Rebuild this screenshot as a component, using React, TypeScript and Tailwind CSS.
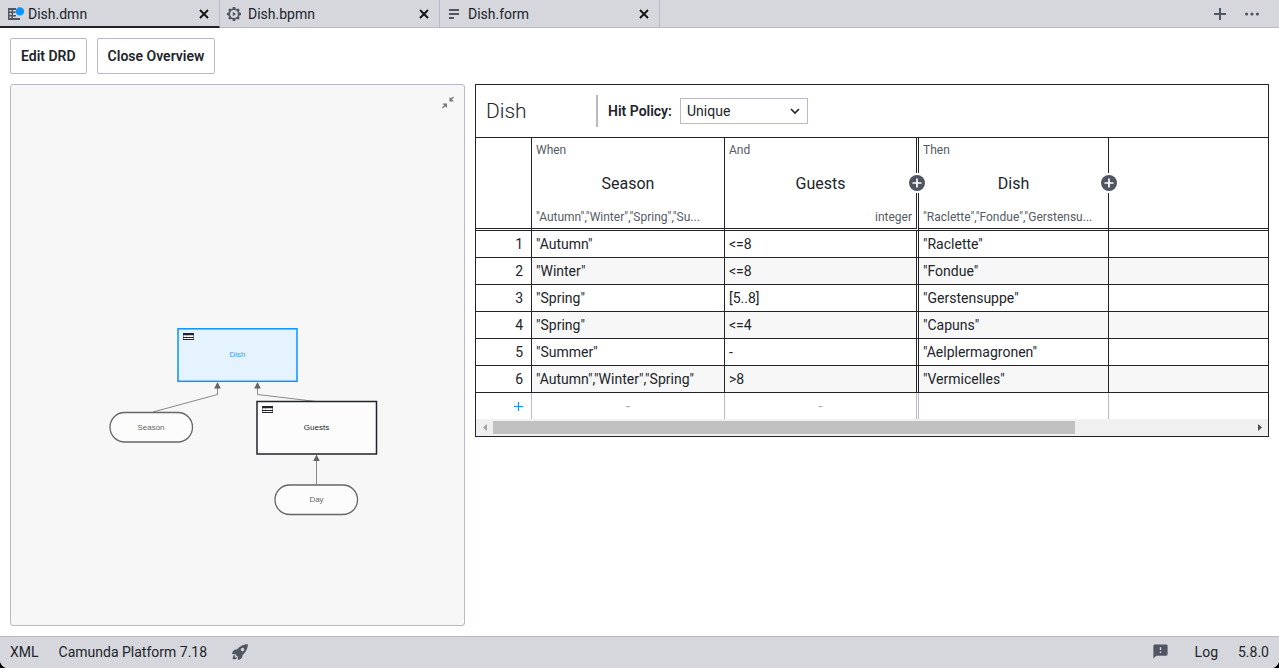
import type { ReactNode } from 'react';
import { IoRocketSharp } from 'react-icons/io5';
import { MdFeedback } from 'react-icons/md';

function DmnIcon() {
  return (
    <svg viewBox="0 0 16 16" className="size-4 overflow-visible" fill="none" aria-hidden="true">
      <path
        fill="#505562"
        fillRule="evenodd"
        d="M2 2h8v2H7v1.500h2.600V7H7v2h3v1.500H7V12h7v2H2zM3.500 4v1.500h2V4zm0 3v2h2V7zm0 3.500v1.500h2v-1.500z"
      />
      <circle cx="13.900" cy="5.400" r="4.200" fill="#0b93ff" />
    </svg>
  );
}

function BpmnIcon() {
  return (
    <svg viewBox="0 0 16 16" className="size-4" fill="none" stroke="#505562" aria-hidden="true">
      <circle cx="8" cy="8" r="4.800" strokeWidth="1.800" />
      <path
        strokeWidth="2.600"
        d="M8 1v2.200M8 12.800V15M1 8h2.200M12.800 8H15M3.050 3.050l1.500 1.500M11.450 11.450l1.500 1.500M3.050 12.950l1.500-1.500M11.450 4.550l1.500-1.500"
      />
      <path stroke="none" fill="#505562" d="M6.800 5.800v4.400L10 8z" />
    </svg>
  );
}

function FormIcon() {
  return (
    <svg viewBox="0 0 16 16" className="size-4" fill="#505562" aria-hidden="true">
      <path d="M3 3h10v2H3zM3 7h10v2H3zM3 11h5v2H3z" />
    </svg>
  );
}

const tabs: { name: string; icon: ReactNode; active?: boolean }[] = [
  { name: 'Dish.dmn', icon: <DmnIcon />, active: true },
  { name: 'Dish.bpmn', icon: <BpmnIcon /> },
  { name: 'Dish.form', icon: <FormIcon /> },
];

function TabBar() {
  return (
    <header className="flex h-7 shrink-0 bg-[#d5d7dd]">
      <nav className="flex">
        {tabs.map((tab) => (
          <div
            key={tab.name}
            className={
              tab.active
                ? 'flex w-[220px] items-center border-r border-b-2 border-r-[#b9b9c8] border-b-[#22242a] pt-px pr-[7px] pl-1.5'
                : 'flex w-[220px] items-center border-r border-b border-[#b9b9c8] pr-[7px] pl-1.5'
            }
          >
            <a href="#" className="flex flex-1 items-center gap-1.5 leading-5">
              {tab.icon}
              {tab.name}
            </a>
            <button type="button" aria-label={`Close ${tab.name}`} className="p-0.5">
              <svg viewBox="0 0 12 12" className="size-3" stroke="#111" strokeWidth="1.800">
                <path d="M2 2l8 8M10 2l-8 8" />
              </svg>
            </button>
          </div>
        ))}
      </nav>
      <div className="flex flex-1 items-center justify-end gap-3 border-b border-[#b9b9c8] pr-5">
        <button type="button" aria-label="New tab">
          <svg viewBox="0 0 12 12" className="size-3" stroke="#505562" strokeWidth="2">
            <path d="M6 0v12M0 6h12" />
          </svg>
        </button>
        <button type="button" aria-label="More tabs" className="pl-[7px]">
          <svg viewBox="0 0 14 4" className="h-1 w-3.5" fill="#505562">
            <circle cx="1.600" cy="2" r="1.600" />
            <circle cx="7" cy="2" r="1.600" />
            <circle cx="12.400" cy="2" r="1.600" />
          </svg>
        </button>
      </div>
    </header>
  );
}

function DecisionTableMark({ x, y }: { x: number; y: number }) {
  return (
    <g transform={`translate(${x} ${y})`}>
      <path fill="#fff" d="M0 0h11v7H0z" />
      <path fill="#22242a" d="M0 0h11v2.200H0zM0 3.900h11v1.100H0zM0 6h11v1.100H0zM0 2h.5v5H0zM10.500 2h.5v5h-.5z" />
      <path fill="#22242a" fillOpacity=".4" d="M3 2h.5v5H3z" />
    </g>
  );
}

function RequirementsDiagram() {
  return (
    <svg viewBox="0 0 453 540" className="size-full" role="img" aria-label="Decision requirements diagram">
      <g fill="none" stroke="#888" strokeWidth="1">
        <path d="M142 327L206.500 309.500V300" />
        <path d="M305 316.500L246.500 309.500V300" />
        <path d="M305.500 399.500V372" />
      </g>
      <g fill="#636363">
        <path d="M206.500 297l3.300 6.500h-6.600zM246.500 297l3.300 6.500h-6.600zM305.500 369.500l3.300 6.500h-6.600z" />
      </g>
      <rect x="167" y="243.800" width="119" height="52.500" fill="#e5f3ff" stroke="#0b93ff" strokeWidth="1.500" />
      <rect x="246" y="316.500" width="119.500" height="52.500" fill="#fcfcfc" stroke="#22242a" strokeWidth="1.500" />
      <g fill="#fcfcfc" stroke="#666" strokeWidth="1.300">
        <rect x="99" y="327.500" width="82.500" height="29.500" rx="14.700" />
        <rect x="264" y="400" width="82.500" height="29.500" rx="14.700" />
      </g>
      <DecisionTableMark x={172} y={248} />
      <DecisionTableMark x={251} y={321} />
      <g fontFamily="Liberation Sans, Arial, sans-serif" fontSize="8" textAnchor="middle">
        <text x="226.500" y="272" fill="#3d9bf5">Dish</text>
        <text x="140" y="345" fill="#666">Season</text>
        <text x="305.500" y="345" fill="#22242a">Guests</text>
        <text x="305.500" y="417" fill="#666">Day</text>
      </g>
    </svg>
  );
}

function Overview() {
  return (
    <section className="relative rounded-[3px] border border-[#b9b9c8] bg-[#f7f7f7]">
      <RequirementsDiagram />
      <button type="button" aria-label="Collapse overview" className="absolute top-2.5 right-2">
        <svg viewBox="0 0 16 16" className="size-4" fill="#777" stroke="#777" strokeWidth="1.300">
          <path d="M13.500 2l-2.500 2.500M2.500 13l2.500-2.500" />
          <path stroke="none" d="M9.500 2v4.500H14zM2.500 8.500H7V13z" />
        </svg>
      </button>
    </section>
  );
}

function AddColumnButton({ label }: { label: string }) {
  return (
    <button
      type="button"
      aria-label={label}
      className="absolute top-[35px] -right-[9px] z-10 flex h-5 w-4 items-center bg-white"
    >
      <svg viewBox="0 0 16 16" className="size-4" fill="#505562">
        <circle cx="8" cy="8" r="8" />
        <path d="M8 3.500v9M3.500 8h9" stroke="#fff" strokeWidth="1.700" />
      </svg>
    </button>
  );
}

type Column = { clause: string; name: string; type: string; alignRight?: boolean; add?: string };

const columns: Column[] = [
  { clause: 'When', name: 'Season', type: '"Autumn","Winter","Spring","Su...' },
  { clause: 'And', name: 'Guests', type: 'integer', alignRight: true, add: 'Add input' },
  { clause: 'Then', name: 'Dish', type: '"Raclette","Fondue","Gerstensu...', add: 'Add output' },
];

const rules = [
  ['"Autumn"', '<=8', '"Raclette"'],
  ['"Winter"', '<=8', '"Fondue"'],
  ['"Spring"', '[5..8]', '"Gerstensuppe"'],
  ['"Spring"', '<=4', '"Capuns"'],
  ['"Summer"', '-', '"Aelplermagronen"'],
  ['"Autumn","Winter","Spring"', '>8', '"Vermicelles"'],
];

const columnEdges = ['border-r', 'border-r-[3px] [border-right-style:double]', 'border-r'];

function DecisionTable() {
  return (
    <section className="self-start border border-[#22242a]">
      <div className="flex h-[52px] items-center px-2.5 pb-px">
        <h1 className="w-[110px] text-[21px] leading-8 font-light">Dish</h1>
        <div className="flex h-8 items-center border-l-2 border-[#b9b9c8] pl-2.5">
          <label htmlFor="hit-policy" className="w-[72px] font-semibold whitespace-nowrap">
            Hit Policy:
          </label>
          <div className="relative">
            <select
              id="hit-policy"
              defaultValue="Unique"
              className="h-[26px] w-32 appearance-none border border-[#b9b9c8] bg-white px-1.5"
            >
              <option>Unique</option>
              <option>First</option>
              <option>Any</option>
              <option>Collect</option>
            </select>
            <svg
              viewBox="0 0 10 10"
              className="pointer-events-none absolute top-2 right-2 size-2.5"
              fill="none"
              stroke="#22242a"
              strokeWidth="1.600"
            >
              <path d="M1 3l4 4 4-4" />
            </svg>
          </div>
        </div>
      </div>
      <table className="w-full table-fixed border-separate border-spacing-0 border-t border-[#22242a]">
        <colgroup>
          <col className="w-14" />
          <col className="w-[193px]" />
          <col className="w-[194px]" />
          <col className="w-[190px]" />
          <col />
        </colgroup>
        <thead>
          <tr>
            <td className="border-r border-b-[3px] border-[#22242a] [border-bottom-style:double]" />
            {columns.map((column, i) => (
              <th
                key={column.name}
                scope="col"
                className={`relative h-[93px] border-b-[3px] border-[#22242a] p-0 font-normal [border-bottom-style:double] ${columnEdges[i]}`}
              >
                <div className="flex h-[90px] flex-col justify-between px-1 pt-1 pb-[3px]">
                  <div className="text-left text-xs leading-4 text-[#565a63]">{column.clause}</div>
                  <div className="text-center text-base leading-5">{column.name}</div>
                  <div
                    className={`text-xs leading-4 whitespace-nowrap text-[#565a63] ${column.alignRight ? 'text-right' : 'text-left'}`}
                  >
                    {column.type}
                  </div>
                </div>
                {column.add && <AddColumnButton label={column.add} />}
              </th>
            ))}
            <td className="border-b-[3px] border-[#22242a] [border-bottom-style:double]" />
          </tr>
        </thead>
        <tbody>
          {rules.map((rule, row) => (
            <tr key={row} className="group h-[27px]">
              <th scope="row" className="border-r border-b border-[#22242a] py-0 pr-2 text-right font-normal">
                {row + 1}
              </th>
              {rule.map((value, i) => (
                <td
                  key={i}
                  className={`border-b border-[#22242a] px-1 py-0 whitespace-nowrap group-even:bg-[#f7f7f7] ${columnEdges[i]}`}
                >
                  {value}
                </td>
              ))}
              <td className="border-b border-[#22242a] group-even:bg-[#f7f7f7]" />
            </tr>
          ))}
          <tr className="h-[26px] text-center text-[#a5a7b0]">
            <td className="border-r border-[#b9b9c8] py-0 pr-2 text-right">
              <button type="button" aria-label="Add rule" className="ml-auto block">
                <svg viewBox="0 0 9 9" className="size-[9px]" stroke="#0b93ff" strokeWidth="1.200">
                  <path d="M4.500 0v9M0 4.500h9" />
                </svg>
              </button>
            </td>
            <td className="border-r border-[#b9b9c8] p-0">-</td>
            <td className={`border-[#b9b9c8] p-0 ${columnEdges[1]}`}>-</td>
            <td className="border-r border-[#b9b9c8]" />
            <td />
          </tr>
        </tbody>
      </table>
      <div className="flex h-[17px] items-center bg-[#f0f0f0]">
        <div className="flex w-[17px] justify-center">
          <svg viewBox="0 0 4 7" className="h-[7px] w-1" fill="#a3a3a3">
            <path d="M4 0v7L0 3.500z" />
          </svg>
        </div>
        <div className="flex-1">
          <div className="h-[13px] w-[76.8%] bg-[#c1c1c1]" />
        </div>
        <div className="flex w-[17px] justify-center">
          <svg viewBox="0 0 4 7" className="h-[7px] w-1" fill="#505050">
            <path d="M0 0v7l4-3.500z" />
          </svg>
        </div>
      </div>
    </section>
  );
}

function StatusBar() {
  return (
    <footer className="flex h-8 shrink-0 items-center justify-between rounded-b-lg border-t border-[#b9b9c8] bg-[#d5d7dd] px-2.5 pb-0.5">
      <div className="flex items-center gap-5">
        <button type="button">XML</button>
        <button type="button">Camunda Platform 7.18</button>
        <button type="button" aria-label="Deploy">
          <IoRocketSharp className="ml-1 size-[18px] text-[#505562]" />
        </button>
      </div>
      <div className="flex items-center gap-5">
        <button type="button" aria-label="Feedback">
          <MdFeedback className="mr-1.5 size-[17px] text-[#505562]" />
        </button>
        <button type="button">Log</button>
        <button type="button">5.8.0</button>
      </div>
    </footer>
  );
}

export default function App() {
  return (
    <div className="bg-black">
      <div className="flex min-h-screen flex-col rounded-b-lg bg-white font-['Roboto',sans-serif] text-sm text-[#22242a]">
        <TabBar />
        <main className="flex flex-1 flex-col gap-2.5 p-2.5">
          <div className="flex gap-2.5 font-semibold">
            <button type="button" className="h-9 rounded-xs border border-[#b9b9c8] px-2.5">
              Edit DRD
            </button>
            <button type="button" className="h-9 rounded-xs border border-[#b9b9c8] px-2.5">
              Close Overview
            </button>
          </div>
          <div className="grid flex-1 grid-cols-[455fr_794fr] gap-2.5">
            <Overview />
            <DecisionTable />
          </div>
        </main>
        <StatusBar />
      </div>
    </div>
  );
}
